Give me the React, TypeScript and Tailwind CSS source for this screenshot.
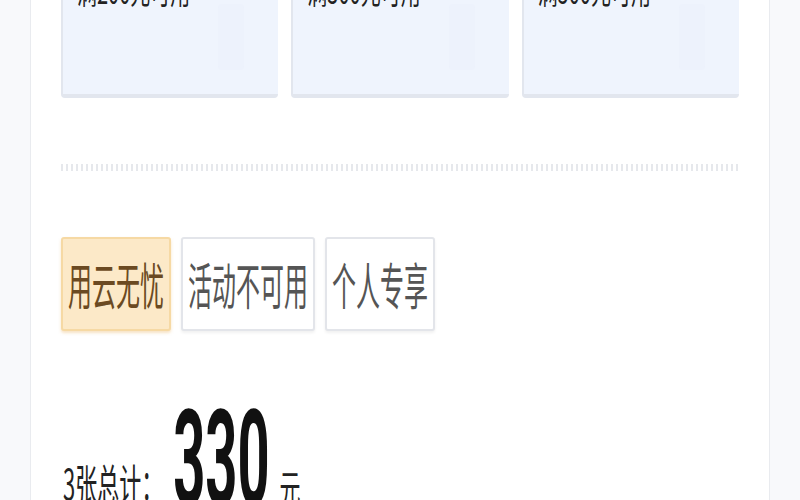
const font = { fontFamily: '"Noto Sans CJK SC", "Noto Sans", sans-serif' };

const coupons = ["满200元可用", "满300元可用", "满500元可用"];

const tags = [
  { label: "用云无忧", active: true },
  { label: "活动不可用", active: false },
  { label: "个人专享", active: false },
];

export default function App() {
  return (
    <div className="w-[800px] h-[500px] overflow-hidden bg-[#f8f9fb]" style={font}>
      <div className="flow-root mx-[30px] h-full bg-white border-x border-[#e9ebef] px-[30px]">
        {/* coupon cards, cut off at the top */}
        <div className="-mt-[40px] grid grid-cols-3 gap-[13px]">
          {coupons.map((c) => (
            <div
              key={c}
              className="relative h-[138px] bg-[#eff4fd] border-l-2 border-b-4 border-[#e2e6ee] rounded-sm overflow-hidden"
            >
              <div className="pt-[13px] pl-[14px] text-[20px] leading-none text-[#222]">
                <span className="inline-block origin-top scale-y-[1.7]">{c}</span>
              </div>
              <div className="absolute right-[34px] top-[44px] w-[26px] h-[66px] rounded bg-[#ebf0fb] opacity-60" />
            </div>
          ))}
        </div>

        {/* dotted divider */}
        <div className="mt-[66px] h-[7px] bg-[repeating-linear-gradient(90deg,#e6e8ec_0_2px,transparent_2px_5px)]" />

        {/* tags */}
        <div className="mt-[66px] flex gap-[10px]">
          {tags.map((t) => (
            <div
              key={t.label}
              className={
                t.active
                  ? "h-[94px] px-[5px] flex items-center rounded-[3px] border-2 border-[#f6d9a4] bg-[#fce9c8] text-[#6b4a22] shadow-[0_2px_3px_rgba(240,200,140,0.5)]"
                  : "h-[94px] px-[5px] flex items-center rounded-[3px] border-2 border-[#e3e5ea] bg-white text-[#555] shadow-[0_2px_3px_rgba(0,0,0,0.06)]"
              }
            >
              <span className="inline-block text-[24px] leading-none scale-y-[2.1]">{t.label}</span>
            </div>
          ))}
        </div>

        {/* total */}
        <div className="mt-[61px] flex items-start">
          <span className="mt-[68px] ml-[2px] inline-block origin-top scale-y-[1.9] text-[22px] leading-none text-[#222]">
            3张总计：
          </span>
          <span
            className="ml-[10px] inline-block origin-top scale-y-[2.4] text-[56px] leading-none font-bold text-[#111]"
            style={{ fontFamily: 'Roboto, "Liberation Sans", sans-serif' }}
          >
            330
          </span>
          <span className="mt-[76px] ml-[10px] inline-block origin-top scale-y-[1.9] text-[21px] leading-none text-[#222]">
            元
          </span>
        </div>
      </div>
    </div>
  );
}
